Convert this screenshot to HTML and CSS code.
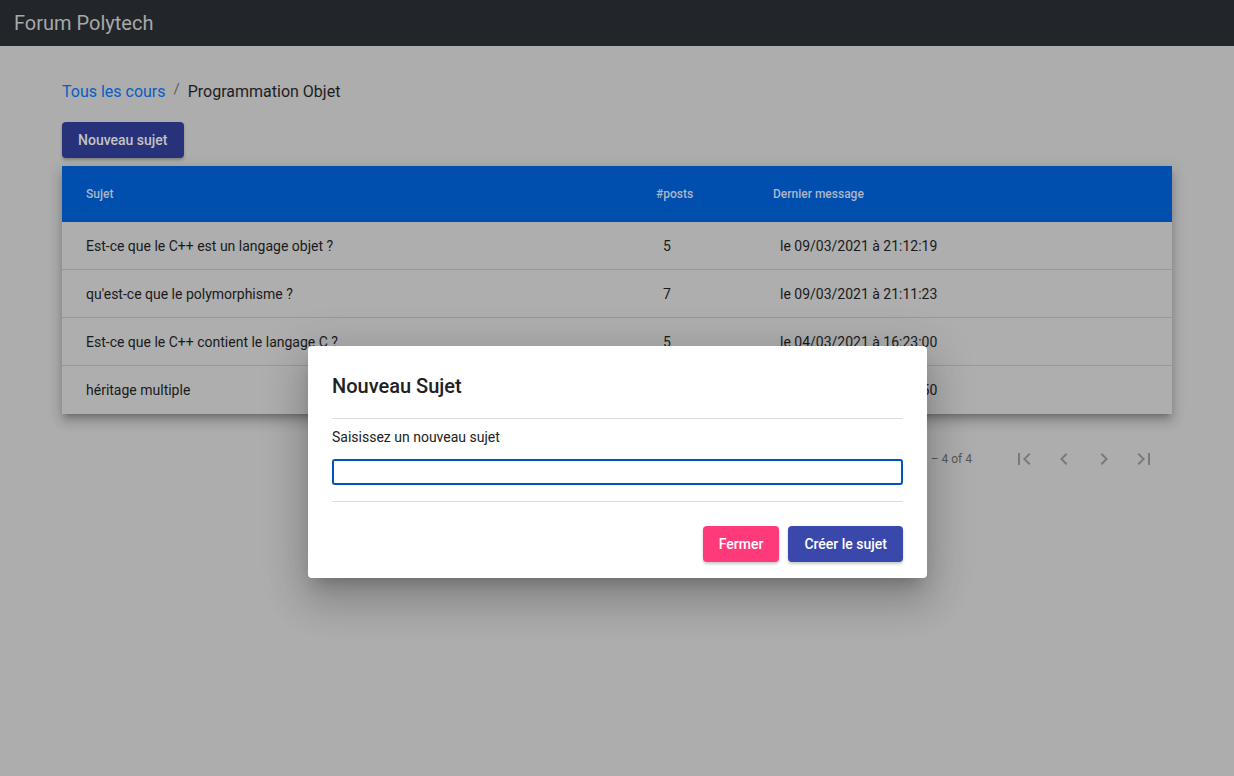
FILE: index.html
```html
<!DOCTYPE html>
<html lang="fr">
<head>
<meta charset="utf-8">
<title>Forum Polytech</title>
<link rel="stylesheet" href="styles.css">
</head>
<body>
<header class="topbar">Forum Polytech</header>
<main class="content">
  <nav class="breadcrumb">
    <a class="crumb-link" href="#">Tous les cours</a>
    <span class="crumb-sep">/</span>
    <span class="crumb-current">Programmation Objet</span>
  </nav>
  <button class="btn btn-indigo btn-new">Nouveau sujet</button>
  <div class="table">
    <div class="row head">
      <div class="cell">Sujet</div>
      <div class="cell">#posts</div>
      <div class="cell">Dernier message</div>
    </div>
    <div class="row">
      <div class="cell">Est-ce que le C++ est un langage objet ?</div>
      <div class="cell num">5</div>
      <div class="cell date">le 09/03/2021 à 21:12:19</div>
    </div>
    <div class="row">
      <div class="cell">qu'est-ce que le polymorphisme ?</div>
      <div class="cell num">7</div>
      <div class="cell date">le 09/03/2021 à 21:11:23</div>
    </div>
    <div class="row">
      <div class="cell">Est-ce que le C++ contient le langage C ?</div>
      <div class="cell num">5</div>
      <div class="cell date">le 04/03/2021 à 16:23:00</div>
    </div>
    <div class="row last">
      <div class="cell">héritage multiple</div>
      <div class="cell num">4</div>
      <div class="cell date">le 02/03/2021 à 10:41:50</div>
    </div>
  </div>
  <div class="paginator">
    <span class="range">1 – 4 of 4</span>
    <div class="pag-buttons">
      <span class="pag-btn"><svg viewBox="0 0 24 24" width="24" height="24"><path d="M18.41 16.59L13.82 12l4.59-4.59L17 6l-6 6 6 6zM6 6h2v12H6z"/></svg></span>
      <span class="pag-btn"><svg viewBox="0 0 24 24" width="24" height="24"><path d="M15.41 7.41L14 6l-6 6 6 6 1.41-1.41L10.83 12z"/></svg></span>
      <span class="pag-btn"><svg viewBox="0 0 24 24" width="24" height="24"><path d="M10 6L8.59 7.41 13.17 12l-4.58 4.59L10 18l6-6z"/></svg></span>
      <span class="pag-btn"><svg viewBox="0 0 24 24" width="24" height="24"><path d="M5.59 7.41L10.18 12l-4.59 4.59L7 18l6-6-6-6zM16 6h2v12h-2z"/></svg></span>
    </div>
  </div>
</main>
<div class="dialog">
  <h2 class="dialog-title">Nouveau Sujet</h2>
  <div class="dialog-body">
    <label class="dialog-label" for="sujet">Saisissez un nouveau sujet</label>
    <input class="dialog-input" id="sujet" type="text">
  </div>
  <div class="dialog-actions">
    <button class="btn btn-pink">Fermer</button>
    <button class="btn btn-indigo2">Créer le sujet</button>
  </div>
</div>
</body>
</html>
```
FILE: styles.css
```css
* { box-sizing: border-box; }
html, body {
  margin: 0;
  padding: 0;
  height: 100%;
}
body {
  background: #adadad;
  font-family: Roboto, "Liberation Sans", sans-serif;
  color: #1c1c1c;
  overflow: hidden;
}
.topbar {
  height: 46px;
  background: #222529;
  color: #a8a8a8;
  font-size: 20px;
  line-height: 46px;
  padding-left: 14px;
}
.content {
  padding: 36px 62px 0 62px;
  display: flex;
  flex-direction: column;
  align-items: flex-start;
}
.breadcrumb {
  display: flex;
  align-items: center;
  font-size: 16px;
  line-height: 20px;
}
.crumb-link {
  color: #0a5dc2;
  text-decoration: none;
}
.crumb-sep {
  color: #5c5c5c;
  padding: 0 8px;
  font-size: 15px;
  position: relative;
  top: -3px;
}
.crumb-current {
  color: #1d1d1d;
}
.btn {
  border: none;
  font-family: Roboto, "Liberation Sans", sans-serif;
  font-size: 14px;
  font-weight: 500;
  height: 36px;
  padding: 0 16px;
  border-radius: 4px;
  cursor: pointer;
}
.btn-new {
  margin-top: 20px;
  background: #28327a;
  color: #c4c4c4;
  box-shadow: 0 2px 3px rgba(0,0,0,0.25);
}
.table {
  margin-top: 8px;
  width: 100%;
  background: #aeaeae;
  box-shadow: 0 5px 6px -3px rgba(0,0,0,0.25), 0 8px 10px 1px rgba(0,0,0,0.12), 0 3px 14px 2px rgba(0,0,0,0.1);
}
.row {
  display: grid;
  grid-template-columns: 570px 117px 1fr;
  padding-left: 24px;
  height: 48px;
  align-items: center;
  font-size: 14px;
  border-bottom: 1px solid #989898;
  color: #1a1a1a;
}
.row.last { border-bottom: none; }
.row.head {
  height: 56px;
  background: #004fae;
  border-bottom: none;
  font-size: 12px;
  font-weight: 500;
  color: #aeb6c9;
}
.cell.num { padding-left: 7px; }
.cell.date { padding-left: 7px; }
.paginator {
  width: 100%;
  height: 56px;
  margin-top: 17px;
  display: flex;
  justify-content: flex-end;
  align-items: center;
  padding-right: 8px;
  color: #575757;
  font-size: 12px;
}
.range { margin-right: 32px; }
.pag-buttons { display: flex; }
.pag-btn {
  width: 40px;
  height: 40px;
  display: flex;
  align-items: center;
  justify-content: center;
}
.pag-btn svg { fill: #7a7a7a; }
.dialog {
  position: absolute;
  left: 308px;
  top: 346px;
  width: 619px;
  background: #ffffff;
  border-radius: 4px;
  padding: 24px 24px 16px 24px;
  box-shadow: 0 11px 15px -7px rgba(0,0,0,0.2), 0 24px 38px 3px rgba(0,0,0,0.14), 0 9px 46px 8px rgba(0,0,0,0.12);
}
.dialog-title {
  margin: 0;
  font-size: 20px;
  font-weight: 500;
  line-height: 32px;
  color: #212121;
  padding-bottom: 16px;
  border-bottom: 1px solid #dcdcdc;
}
.dialog-body {
  display: flex;
  flex-direction: column;
  padding: 8px 0 16px 0;
  border-bottom: 1px solid #dcdcdc;
}
.dialog-label {
  font-size: 14px;
  line-height: 20px;
  color: #212121;
}
.dialog-input {
  margin-top: 12px;
  height: 26px;
  border: 2px solid #0052bf;
  border-radius: 3px;
  outline: none;
  font-size: 14px;
  padding: 0 6px;
}
.dialog-actions {
  display: flex;
  justify-content: flex-end;
  gap: 9px;
  padding-top: 24px;
}
.btn-pink {
  background: #ff3a7b;
  color: #ffffff;
  box-shadow: 0 2px 3px rgba(0,0,0,0.22);
}
.btn-indigo2 {
  background: #3a48ac;
  color: #ffffff;
  box-shadow: 0 2px 3px rgba(0,0,0,0.22);
}
```
